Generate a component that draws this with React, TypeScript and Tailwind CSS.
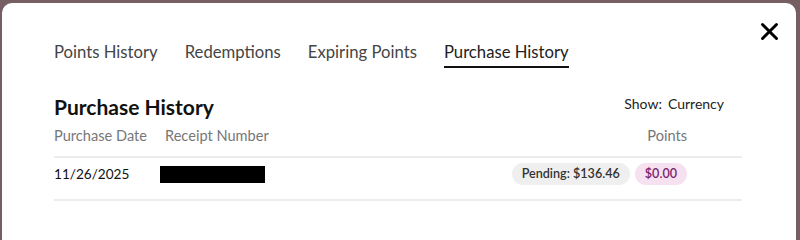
export default function App() {
  const tabs = ["Points History", "Redemptions", "Expiring Points", "Purchase History"];
  const active = "Purchase History";

  return (
    <div
      className="w-[800px] h-[240px] overflow-hidden bg-[#755f62] pt-[3px] pl-[2px] pr-[4px]"
      style={{ fontFamily: "Lato, 'Open Sans', sans-serif" }}
    >
      <div className="relative h-[260px] rounded-[10px] bg-white pl-[52px] pr-[54px] pt-[37px]">
        <button className="absolute right-[17px] top-[19px] p-0 text-black">
          <svg width="19" height="19" viewBox="0 0 19 19" fill="none">
            <path d="M2.5 2.5L16.5 16.5M16.5 2.5L2.5 16.5" stroke="currentColor" strokeWidth="3" strokeLinecap="round" />
          </svg>
        </button>

        {/* Tabs */}
        <div className="flex gap-[27px]">
          {tabs.map((t) => (
            <div
              key={t}
              className={
                t === active
                  ? "text-[16.7px] leading-[24px] pb-[2px] border-b-2 border-[#111] text-[#222]"
                  : "text-[16.7px] leading-[24px] pb-[2px] border-b-2 border-transparent text-[#454545]"
              }
            >
              {t}
            </div>
          ))}
        </div>

        {/* Heading */}
        <div className="mt-[25px] flex items-start justify-between">
          <h2 className="text-[21px] leading-[28px] font-bold text-[#111]">Purchase History</h2>
          <div className="mr-[18px] mt-[1px] text-[14px] leading-[20px] text-[#222]">
            Show:<span className="ml-[6px]">Currency</span>
          </div>
        </div>

        {/* Table */}
        <div className="mt-[4px] grid grid-cols-[111px_1fr_auto] pr-[55px] pb-[9px] border-b-2 border-[#ececec] text-[14.6px] leading-[22px] text-[#777]">
          <div>Purchase Date</div>
          <div>Receipt Number</div>
          <div className="text-right">Points</div>
        </div>

        <div className="grid grid-cols-[106px_1fr_auto] items-center pr-[55px] pt-[5px] pb-[14px] border-b-2 border-[#ececec] text-[13.6px] leading-[22px] text-[#111]">
          <div>11/26/2025</div>
          <div>
            <div className="h-[17px] w-[105px] bg-black" />
          </div>
          <div className="flex items-center gap-[5px]">
            <span className="h-[22px] flex items-center rounded-full bg-[#efefef] px-[10px] text-[12.6px] font-semibold text-[#333]">
              Pending: $136.46
            </span>
            <span className="h-[22px] flex items-center rounded-full bg-[#f5e1f0] px-[10px] text-[12.6px] font-semibold text-[#7b1f6e]">
              $0.00
            </span>
          </div>
        </div>
      </div>
    </div>
  );
}
